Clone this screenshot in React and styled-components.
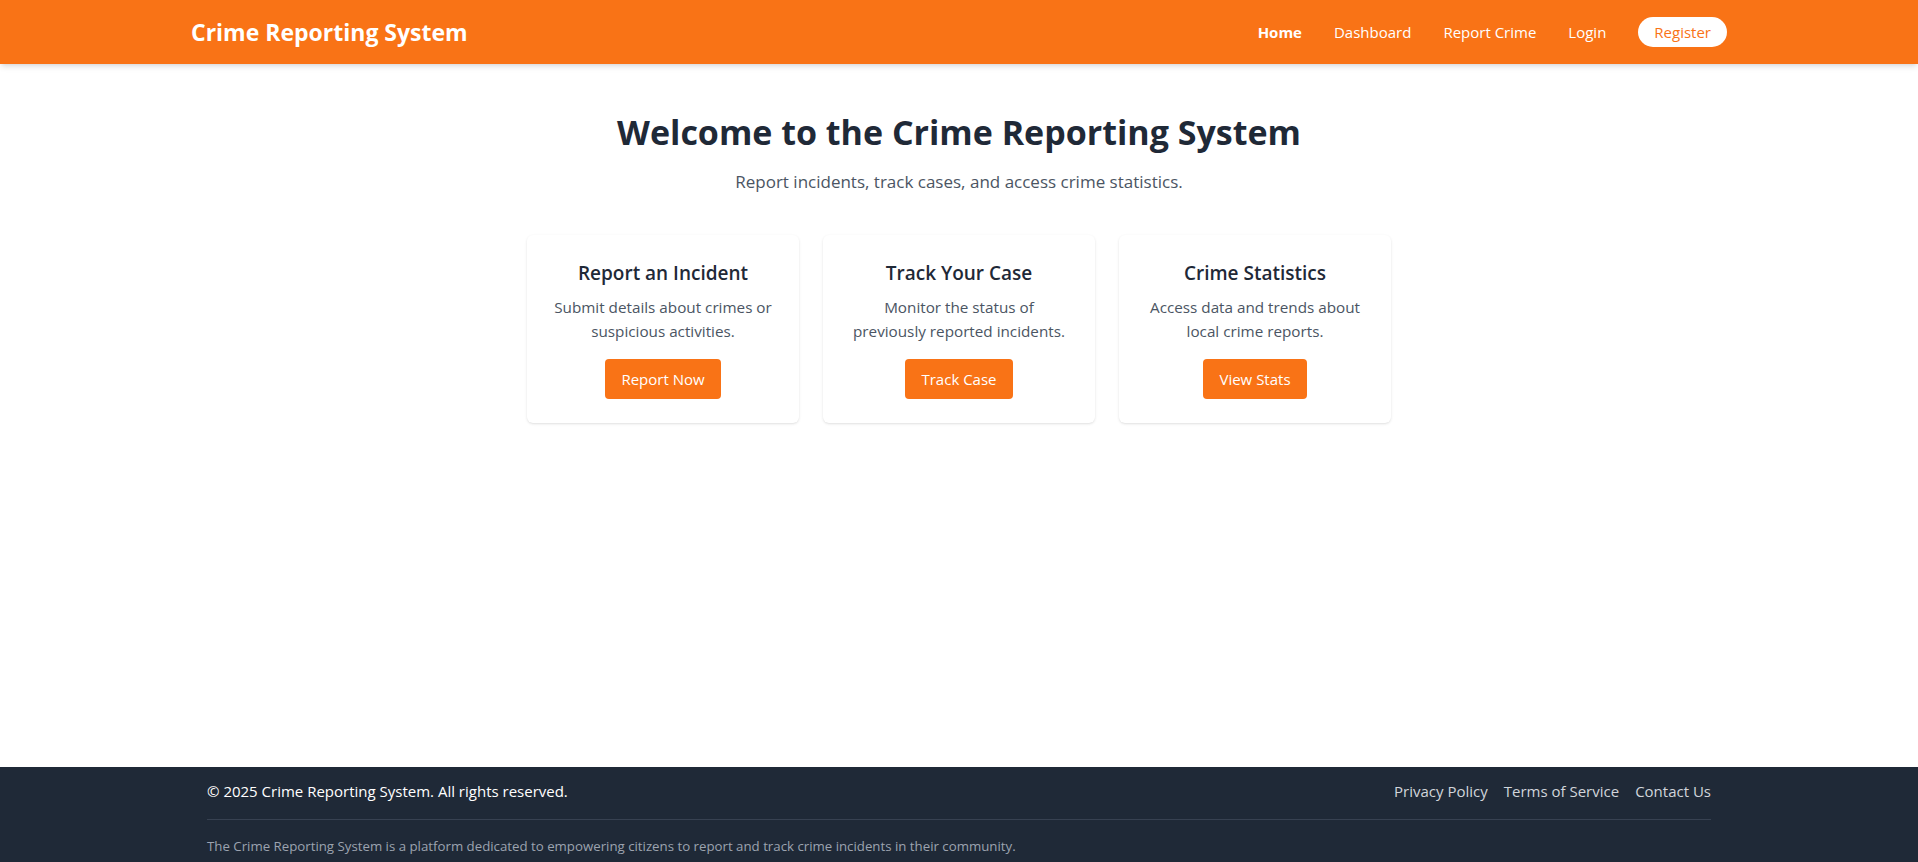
import React from "react"
import styled, { createGlobalStyle } from "styled-components"

const GlobalStyle = createGlobalStyle`
  * { box-sizing: border-box; }
  body {
    margin: 0;
    font-family: "Open Sans", "Noto Sans", sans-serif;
    background: #ffffff;
    color: #1f2937;
  }
`

const Page = styled.div`
  display: flex;
  flex-direction: column;
  min-height: 100vh;
`

const Header = styled.header`
  background: #f97316;
  box-shadow: 0 4px 6px -1px rgba(0, 0, 0, 0.1), 0 2px 4px -2px rgba(0, 0, 0, 0.1);
  position: relative;
  z-index: 1;
`

const HeaderInner = styled.div`
  max-width: 1536px;
  margin: 0 auto;
  height: 64px;
  display: flex;
  align-items: center;
  justify-content: space-between;
`

const Logo = styled.h1`
  margin: 0;
  font-size: 23px;
  line-height: 32px;
  font-weight: 700;
  color: #ffffff;
`

const Nav = styled.nav`
  display: flex;
  align-items: center;
  gap: 32px;
`

const NavLink = styled.a`
  color: #ffffff;
  font-size: 15px;
  line-height: 24px;
  font-weight: ${(p) => (p.$active ? 700 : 400)};
  text-decoration: none;
  cursor: pointer;
`

const RegisterButton = styled.a`
  background: #ffffff;
  color: #f97316;
  font-size: 15px;
  line-height: 22px;
  padding: 4px 16px;
  border-radius: 999px;
  text-decoration: none;
  cursor: pointer;
`

const Main = styled.main`
  min-height: calc(100vh - 64px - 95px);
  padding: 48px 0;
  text-align: center;
`

const Title = styled.h2`
  margin: 0 0 16px;
  font-size: 34px;
  line-height: 40px;
  font-weight: 700;
  color: #1f2937;
`

const Subtitle = styled.p`
  margin: 0 0 39px;
  font-size: 17px;
  line-height: 28px;
  color: #4b5563;
`

const Cards = styled.div`
  max-width: 896px;
  margin: 0 auto;
  padding: 0 16px;
  display: grid;
  grid-template-columns: repeat(3, 1fr);
  gap: 24px;
`

const Card = styled.div`
  background: #ffffff;
  border-radius: 6px;
  padding: 24px;
  box-shadow: 0 1px 3px rgba(0, 0, 0, 0.1), 0 1px 2px -1px rgba(0, 0, 0, 0.1);
`

const CardTitle = styled.h3`
  margin: 0 0 8px;
  font-size: 19px;
  line-height: 28px;
  font-weight: 600;
  color: #1f2937;
`

const CardText = styled.p`
  margin: 0 0 16px;
  font-size: 15.25px;
  line-height: 24px;
  color: #4b5563;
`

const ActionButton = styled.button`
  background: #f97316;
  color: #ffffff;
  border: none;
  border-radius: 4px;
  padding: 8px 16px;
  font-family: inherit;
  font-size: 15px;
  line-height: 24px;
  cursor: pointer;
`

const Footer = styled.footer`
  background: #1f2937;
  color: #ffffff;
  padding: 12px 0;
`

const FooterInner = styled.div`
  max-width: 1536px;
  margin: 0 auto;
  padding: 0 16px;
`

const FooterRow = styled.div`
  display: flex;
  align-items: center;
  justify-content: space-between;
  font-size: 15px;
  line-height: 24px;
`

const FooterLinks = styled.div`
  display: flex;
  gap: 16px;
`

const FooterLink = styled.a`
  color: #d1d5db;
  text-decoration: none;
  cursor: pointer;
`

const FooterNote = styled.p`
  margin: 16px 0 0;
  padding-top: 16px;
  border-top: 1px solid #374151;
  font-size: 13.25px;
  line-height: 20px;
  color: #9ca3af;
`

const cards = [
  { title: "Report an Incident", text: "Submit details about crimes or suspicious activities.", action: "Report Now" },
  { title: "Track Your Case", text: "Monitor the status of previously reported incidents.", action: "Track Case" },
  { title: "Crime Statistics", text: "Access data and trends about local crime reports.", action: "View Stats" },
]

export default function App() {
  return (
    <Page>
      <GlobalStyle />
      <Header>
        <HeaderInner>
          <Logo>Crime Reporting System</Logo>
          <Nav>
            <NavLink $active>Home</NavLink>
            <NavLink>Dashboard</NavLink>
            <NavLink>Report Crime</NavLink>
            <NavLink>Login</NavLink>
            <RegisterButton>Register</RegisterButton>
          </Nav>
        </HeaderInner>
      </Header>

      <Main>
        <Title>Welcome to the Crime Reporting System</Title>
        <Subtitle>Report incidents, track cases, and access crime statistics.</Subtitle>
        <Cards>
          {cards.map((c) => (
            <Card key={c.title}>
              <CardTitle>{c.title}</CardTitle>
              <CardText>{c.text}</CardText>
              <ActionButton>{c.action}</ActionButton>
            </Card>
          ))}
        </Cards>
      </Main>

      <Footer>
        <FooterInner>
          <FooterRow>
            <span>© 2025 Crime Reporting System. All rights reserved.</span>
            <FooterLinks>
              <FooterLink>Privacy Policy</FooterLink>
              <FooterLink>Terms of Service</FooterLink>
              <FooterLink>Contact Us</FooterLink>
            </FooterLinks>
          </FooterRow>
          <FooterNote>
            The Crime Reporting System is a platform dedicated to empowering citizens to report and track crime incidents in their community.
          </FooterNote>
        </FooterInner>
      </Footer>
    </Page>
  )
}
